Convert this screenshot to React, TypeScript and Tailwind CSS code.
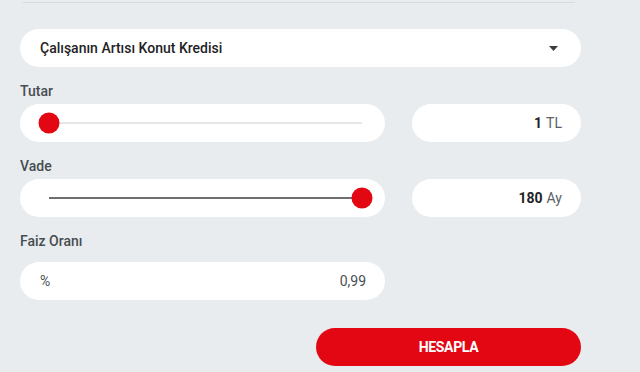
const font = { fontFamily: 'Roboto, "Liberation Sans", Arial, sans-serif' };

const Label = ({ text, className = '' }: { text: string; className?: string }) => (
  <div className={`text-[14px] leading-4 text-[#474c51] ${className}`}>{text}</div>
);

// slider inside a white pill
const SliderBox = ({ value, dark }: { value: number; dark?: boolean }) => (
  <div className="flex h-[38px] items-center rounded-full bg-white pl-[29px] pr-[23px]">
    <div className="relative h-[2px] w-full" style={{ background: dark ? '#6d6f71' : '#e4e6e8' }}>
      <div
        className="absolute top-1/2 h-[21px] w-[21px] -translate-x-1/2 -translate-y-1/2 rounded-full bg-[#e30613]"
        style={{ left: `${value}%` }}
      />
    </div>
  </div>
);

const ValueBox = ({ num, unit }: { num: string; unit: string }) => (
  <div className="flex h-[38px] items-center justify-end rounded-full bg-white pr-[19px] text-[14px]">
    <span className="font-bold text-[#1f2326]">{num}</span>
    <span className="ml-[4px] text-[#5b6066]">{unit}</span>
  </div>
);

export default function App() {
  return (
    <div className="min-h-[372px] w-[640px] bg-[#e8ecee] pl-5 pr-[59px]" style={font}>
      {/* top divider */}
      <div className="ml-[3px] mr-[6px] pt-[2px]">
        <div className="h-px bg-[#d6dbde]" />
      </div>

      {/* loan type select */}
      <div className="mt-[26px] flex h-[38px] items-center justify-between rounded-full bg-white pl-5 pr-[23px]">
        <span className="text-[14px] font-medium text-[#1f2326]">Çalışanın Artısı Konut Kredisi</span>
        <svg width="9" height="5" viewBox="0 0 9 5">
          <path d="M0 0h9L4.5 5z" fill="#3a3d40" />
        </svg>
      </div>

      {/* Tutar */}
      <Label text="Tutar" className="mt-[16px] font-medium" />
      <div className="mt-[5px] grid grid-cols-[365px_169px] gap-x-[27px]">
        <SliderBox value={0} />
        <ValueBox num="1" unit="TL" />
      </div>

      {/* Vade */}
      <Label text="Vade" className="mt-[16px] font-medium" />
      <div className="mt-[5px] grid grid-cols-[365px_169px] gap-x-[27px]">
        <SliderBox value={100} dark />
        <ValueBox num="180" unit="Ay" />
      </div>

      {/* Faiz */}
      <Label text="Faiz Oranı" className="mt-[16px] font-medium" />
      <div className="mt-[13px] flex h-[38px] w-[365px] items-center justify-between rounded-full bg-white pl-5 pr-[19px] text-[14px] text-[#4a4f54]">
        <span>%</span>
        <span>0,99</span>
      </div>

      <div className="mt-[28px] flex justify-end">
        <button className="h-[38px] w-[265px] rounded-full bg-[#e30613] text-[14px] font-bold tracking-tight text-white">
          HESAPLA
        </button>
      </div>
    </div>
  );
}
